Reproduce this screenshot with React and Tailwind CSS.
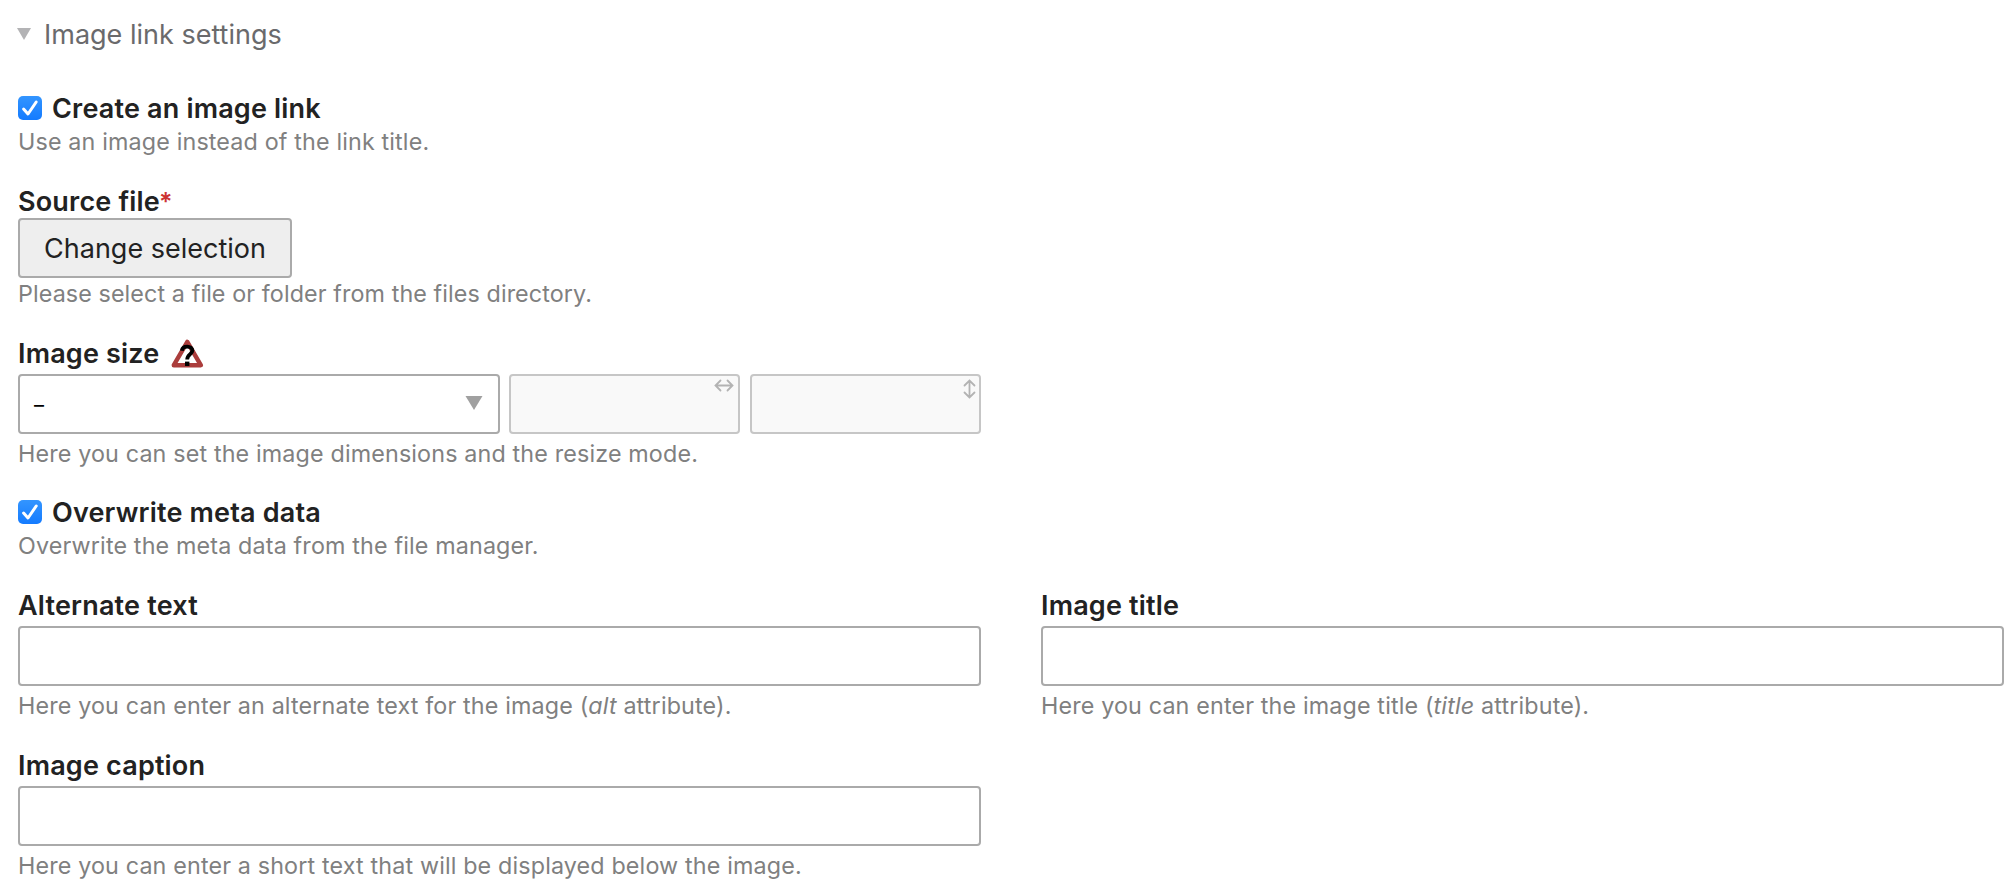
function Checkbox({ label }) {
  return (
    <label className="flex h-8 items-center gap-[10px]">
      <svg className="size-6 shrink-0" viewBox="0 0 24 24" fill="none">
        <defs>
          <linearGradient id="check-fill" x1="0" y1="0" x2="0" y2="1">
            <stop offset="0" stopColor="#3395ff" />
            <stop offset="1" stopColor="#147bff" />
          </linearGradient>
        </defs>
        <rect width="24" height="24" rx="5" fill="url(#check-fill)" />
        <path d="M5.6 13.1L10 18L18.2 6" stroke="#fff" strokeWidth="3" strokeLinecap="round" strokeLinejoin="round" />
      </svg>
      <span className="pt-0.5 text-[27px] leading-8 font-semibold tracking-[0.18px]">{label}</span>
    </label>
  );
}

function Label({ children }) {
  return (
    <div className="flex h-8 items-center pt-0.5 text-[27px] leading-8 font-semibold tracking-[0.18px]">
      {children}
    </div>
  );
}

function Help({ children }) {
  return <p className="h-8 text-[23.3px] leading-8 tracking-[0.15px] whitespace-nowrap text-[#808080]">{children}</p>;
}

function TextField({ label, children }) {
  return (
    <div className="flex flex-col">
      <Label>{label}</Label>
      <input type="text" className="mt-[5px] h-[60px] w-full rounded-[4px] border-2 border-[#aaaaaa] bg-white px-3 text-[27px]" />
      <div className="mt-[4px]">
        <Help>{children}</Help>
      </div>
    </div>
  );
}

function HelpIcon() {
  return (
    <svg className="mb-0.5 ml-3 h-[29px] w-[33px]" viewBox="0 0 33 29" fill="none">
      <path d="M16.3 2.9L29.8 26.2H2.8Z" stroke="#ab3d3c" strokeWidth="4.4" strokeLinejoin="round" />
      <path d="M10.9 11.8C11.2 8.9 13.4 7.6 16.2 7.6C19.4 7.6 21.4 9.2 21.4 11.6C21.4 15 16.2 15.4 16.2 20.4" stroke="#000" strokeWidth="3.8" />
      <rect x="14" y="22.6" width="4.4" height="4.4" fill="#000" />
    </svg>
  );
}

export default function App() {
  return (
    <main className="h-[882px] w-full overflow-hidden bg-white pt-[17px] pr-3 pl-[18px] font-['Inter',sans-serif] text-[#222222]">
      <div className="flex h-[34px] items-center gap-[13px] text-[27px] leading-[34px] text-[#6a6a6c]">
        <svg className="-ml-px h-3 w-[14px]" viewBox="0 0 14 12">
          <path d="M0 0H14L7 12Z" fill="#b3b3b5" />
        </svg>
        <h2 className="pt-0.5">Image link settings</h2>
      </div>

      <section className="mt-[41px]">
        <Checkbox label="Create an image link" />
        <div className="pt-[2px]">
          <Help>Use an image instead of the link title.</Help>
        </div>
      </section>

      <section className="mt-[27px]">
        <Label>
          Source file<span className="-ml-px text-[25px] text-[#cc3333]">*</span>
        </Label>
        <button type="button" className="mt-px block h-[60px] w-[274px] rounded-[4px] border-2 border-[#aaaaaa] bg-[#eeeeee] pt-0.5 text-[27px] leading-8">
          Change selection
        </button>
        <div className="tracking-[0.1px] *:tracking-[0.1px]">
          <Help>Please select a file or folder from the files directory.</Help>
        </div>
      </section>

      <section className="mt-[27px]">
        <Label>
          Image size
          <HelpIcon />
        </Label>
        <div className="mt-[5px] flex h-[60px] w-[963px] gap-[9px]">
          <div className="flex w-[482px] items-center justify-between rounded-[4px] border-2 border-[#aaaaaa] pr-[15px] pl-[14px]">
            <span className="pt-0.5 text-[20px] text-black">–</span>
            <svg className="mb-0.5 h-[14px] w-[18px]" viewBox="0 0 18 14">
              <path d="M0.5 0H17.5L9 14Z" fill="#a0a0a0" />
            </svg>
          </div>
          <div className="flex w-[231px] items-start justify-end rounded-[4px] border-2 border-[#c6c6c6] bg-[#f9f9f9] pt-[3px] pr-1">
            <svg className="h-[13px] w-5" viewBox="0 0 20 13" fill="none" stroke="#b3b3b3" strokeWidth="1.8" strokeLinecap="round">
              <path d="M2 6.5H18M6.5 1.5L1.5 6.5L6.5 11.5M13.5 1.5L18.5 6.5L13.5 11.5" />
            </svg>
          </div>
          <div className="ml-px flex w-[231px] items-start justify-end rounded-[4px] border-2 border-[#c6c6c6] bg-[#f9f9f9] pt-[3px] pr-[3px]">
            <svg className="h-5 w-[13px]" viewBox="0 0 13 20" fill="none" stroke="#b3b3b3" strokeWidth="1.8" strokeLinecap="round">
              <path d="M6.5 2V18M1.5 6.5L6.5 1.5L11.5 6.5M1.5 13.5L6.5 18.5L11.5 13.5" />
            </svg>
          </div>
        </div>
        <div className="mt-[4px]">
          <Help>Here you can set the image dimensions and the resize mode.</Help>
        </div>
      </section>

      <section className="mt-[26px]">
        <Checkbox label="Overwrite meta data" />
        <div className="pt-[2px]">
          <Help>Overwrite the meta data from the file manager.</Help>
        </div>
      </section>

      <section className="mt-[27px] grid grid-cols-[963px_963px] gap-x-[60px] gap-y-[27px]">
        <TextField label="Alternate text">
          Here you can enter an alternate text for the image (<em>alt</em> attribute).
        </TextField>
        <TextField label="Image title">
          Here you can enter the image title (<em>title</em> attribute).
        </TextField>
        <TextField label="Image caption">
          Here you can enter a short text that will be displayed below the image.
        </TextField>
      </section>
    </main>
  );
}
